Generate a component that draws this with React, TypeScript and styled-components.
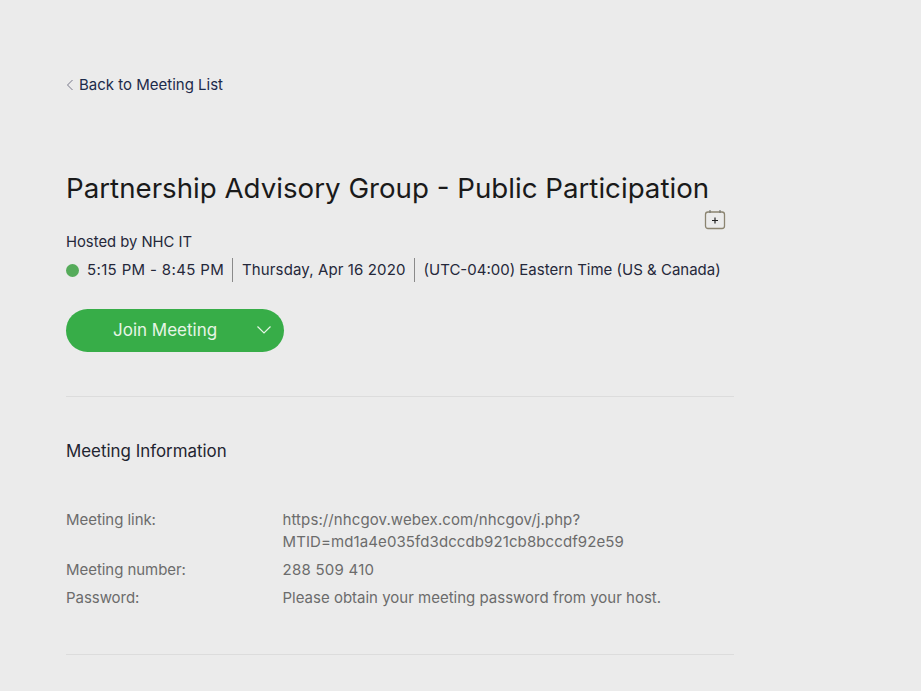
import React from 'react';
import styled, { createGlobalStyle } from 'styled-components';

const Global = createGlobalStyle`
  html, body { margin: 0; padding: 0; background: #ebebeb; }
  body { font-family: Inter, "Liberation Sans", Arial, sans-serif; }
`;

const Page = styled.div`
  width: 921px;
  height: 691px;
  box-sizing: border-box;
  padding: 76px 0 0 66px;
  overflow: hidden;
  background: #ebebeb;
`;

const Content = styled.main`
  width: 668px;
  display: flex;
  flex-direction: column;
`;

const BackLink = styled.a`
  display: flex;
  align-items: center;
  height: 18px;
  font-size: 15px;
  line-height: 18px;
  color: #1c2a4a;
`;

const TitleBlock = styled.div`
  margin-top: 77px;
  height: 30px;
`;

const Title = styled.h1`
  margin: 0;
  white-space: nowrap;
  font-size: 27.7px;
  line-height: 34px;
  font-weight: 400;
  color: #1a1a1a;
`;

const CalendarRow = styled.div`
  display: flex;
  justify-content: flex-end;
  margin: 8px 8px 0 0;
  height: 22px;
`;

const Host = styled.div`
  margin-top: 2px;
  font-size: 14.8px;
  line-height: 18px;
  color: #25283a;
`;

const TimeRow = styled.div`
  display: flex;
  align-items: center;
  margin-top: 7px;
  height: 24px;
  font-size: 15px;
  color: #25283a;
  white-space: nowrap;
`;

const StatusDot = styled.span`
  width: 13px;
  height: 13px;
  border-radius: 50%;
  background: #55ab5a;
  margin-right: 8px;
`;

const TimeCell = styled.span<{ $divided?: boolean; $spacing?: number; $endPad?: number }>`
  display: flex;
  align-items: center;
  box-sizing: border-box;
  height: 24px;
  padding: 0 ${(p) => p.$endPad ?? 9}px 2px 9px;
  letter-spacing: ${(p) => p.$spacing ?? 0}px;
  border-left: ${(p) => (p.$divided ? '1px solid #8a8a8a' : 'none')};
  ${(p) => (p.$divided ? '' : 'padding-left: 0;')}
`;

const JoinButton = styled.button`
  display: flex;
  align-items: center;
  margin-top: 27px;
  width: 218px;
  height: 43px;
  border: none;
  border-radius: 22px;
  background: #37ad48;
  color: #e6f5e6;
  font-family: inherit;
  font-size: 17px;
  padding: 0 12px 2px 47px;
`;

const JoinLabel = styled.span`
  flex: 1;
  text-align: left;
`;

const Divider = styled.hr`
  margin: 0;
  border: none;
  border-top: 1px solid #dcdcdc;
`;

const TopDivider = styled(Divider)`
  margin-top: 44px;
`;

const SectionTitle = styled.h2`
  margin: 43px 0 0;
  font-size: 16.9px;
  line-height: 22px;
  font-weight: 400;
  color: #1f2430;
`;

const InfoGrid = styled.dl`
  margin: 47px 0 0;
  display: grid;
  grid-template-columns: 216.5px 1fr;
  row-gap: 6px;
  font-size: 15px;
  line-height: 22px;
  color: #6c6c6c;
`;

const InfoLabel = styled.dt`
  margin: 0;
  letter-spacing: -0.05px;
`;

const InfoValue = styled.dd<{ $spacing?: number }>`
  margin: 0;
  letter-spacing: ${(p) => p.$spacing ?? 0}px;
`;

const BottomDivider = styled(Divider)`
  margin-top: 45px;
`;

const BackIcon = () => (
  <svg width="13" height="16" viewBox="0 0 13 16" fill="none" stroke="#77778a" strokeWidth="1">
    <path d="M6.5 3 1.5 8l5 5" />
  </svg>
);

const DownIcon = () => (
  <svg width="16" height="16" viewBox="0 0 16 16" fill="none" stroke="#e6f5e6" strokeWidth="1.2">
    <path d="M1.5 4.5 8 11l6.5-6.5" />
  </svg>
);

const CalendarIcon = () => (
  <svg width="22" height="22" viewBox="0 0 22 22" fill="none">
    <rect x="1.5" y="3" width="19" height="16.5" rx="2.5" stroke="#8b8470" strokeWidth="1.3" />
    <path d="M6 1v3M16 1v3" stroke="#77776f" strokeWidth="1.2" />
    <path d="M11 8.5v6M8 11.5h6" stroke="#222" strokeWidth="1.2" />
  </svg>
);

export default function App() {
  return (
    <Page>
      <Global />
      <Content>
        <BackLink>
          <BackIcon />
          Back to Meeting List
        </BackLink>
        <TitleBlock>
          <Title>Partnership Advisory Group - Public Participation</Title>
        </TitleBlock>
        <CalendarRow>
          <CalendarIcon />
        </CalendarRow>
        <Host>Hosted by NHC IT</Host>
        <TimeRow>
          <StatusDot />
          <TimeCell $spacing={0.35} $endPad={8}>5:15 PM - 8:45 PM</TimeCell>
          <TimeCell $divided $spacing={0.12} $endPad={8}>Thursday, Apr 16 2020</TimeCell>
          <TimeCell $divided>(UTC-04:00) Eastern Time (US &amp; Canada)</TimeCell>
        </TimeRow>
        <JoinButton>
          <JoinLabel>Join Meeting</JoinLabel>
          <DownIcon />
        </JoinButton>
        <TopDivider />
        <SectionTitle>Meeting Information</SectionTitle>
        <InfoGrid>
          <InfoLabel>Meeting link:</InfoLabel>
          <InfoValue $spacing={0.1}>
            https://nhcgov.webex.com/nhcgov/j.php?
            <br />
            MTID=md1a4e035fd3dccdb921cb8bccdf92e59
          </InfoValue>
          <InfoLabel>Meeting number:</InfoLabel>
          <InfoValue $spacing={0.25}>288 509 410</InfoValue>
          <InfoLabel>Password:</InfoLabel>
          <InfoValue>Please obtain your meeting password from your host.</InfoValue>
        </InfoGrid>
        <BottomDivider />
      </Content>
    </Page>
  );
}
